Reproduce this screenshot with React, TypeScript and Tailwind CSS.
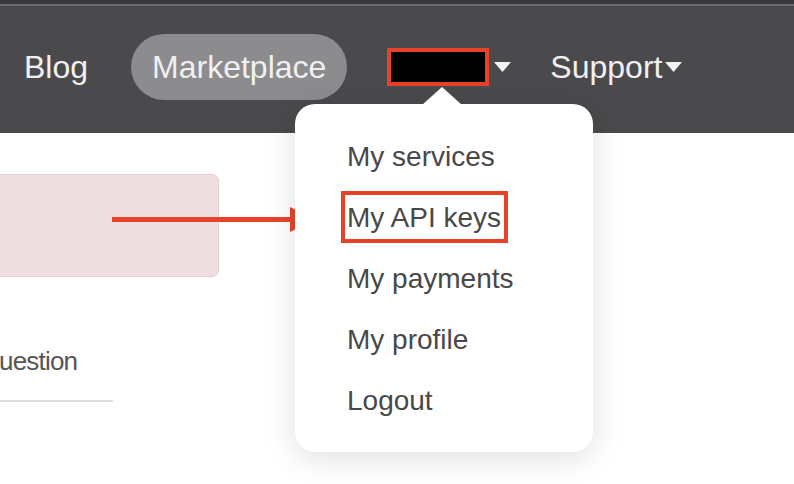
import { ReactNode } from 'react';

const menuItems = ['My services', 'My API keys', 'My payments', 'My profile', 'Logout'];

function Caret() {
  return (
    <svg width="17" height="10" viewBox="0 0 17 10" className="shrink-0">
      <path d="M0 0 L17 0 L8.5 10 Z" fill="#f2f2f2" />
    </svg>
  );
}

function Highlight({ children }: { children: ReactNode }) {
  return (
    <span className="relative inline-block">
      {children}
      <span className="absolute left-[-6px] top-[4px] h-[52px] w-[167px] border-[4px] border-[#e8432a]" />
    </span>
  );
}

export default function App() {
  return (
    <div
      className="relative h-[484px] w-[794px] overflow-hidden bg-white"
      style={{ fontFamily: '"Liberation Sans", Arial, sans-serif' }}
    >
      {/* Top nav */}
      <div className="h-[4px] bg-[#38383b]" />
      <div className="h-[2px] bg-[#6c6c6f]" />
      <header className="flex h-[127px] items-center bg-[#4a4a4d] pb-[5px] text-[32px] text-[#f0f0f0]">
        <span className="ml-[24px]">Blog</span>
        <span className="ml-[43px] flex h-[66px] items-center rounded-full bg-[#8c8c8e] px-[21px]">
          Marketplace
        </span>
        <span className="ml-[40px] h-[38px] w-[102px] border-[4px] border-[#e8432a] bg-black" />
        <span className="ml-[5px]">
          <Caret />
        </span>
        <span className="ml-[39px] flex items-center">
          Support
          <span className="ml-[3px]">
            <Caret />
          </span>
        </span>
      </header>

      {/* Page body, partially visible */}
      <main className="flex flex-col pt-[41px]">
        <div className="-ml-[20px] h-[103px] w-[239px] rounded-[7px] border border-[#e6cdd0] bg-[#f0dfe0]" />
        <div className="-ml-[1px] mt-[68px] text-[26px] leading-[32px] tracking-[-0.8px] text-[#555]">uestion</div>
        <div className="mt-[23px] h-[2px] w-[113px] bg-[#dcdcdc]" />
      </main>

      {/* Annotation arrow */}
      <svg className="absolute left-[112px] top-[207px]" width="204" height="26" viewBox="0 0 204 26">
        <rect x="0" y="10" width="180" height="5" fill="#e8432a" />
        <path d="M178 0 L203 12.5 L178 25 Z" fill="#e8432a" />
      </svg>

      {/* Account dropdown */}
      <div className="absolute left-[295px] top-[104px] h-[348px] w-[298px] rounded-[20px] bg-white shadow-[0_6px_32px_rgba(0,0,0,0.13)]">
        <svg className="absolute left-[127px] top-[-17px]" width="40" height="18" viewBox="0 0 40 18">
          <path d="M0 18 L20 0 L40 18 Z" fill="#ffffff" />
        </svg>
        <ul className="pl-[52px] pt-[22px] text-[28px] leading-[61px] text-[#484848]">
          {menuItems.map((item) => (
            <li key={item}>{item === 'My API keys' ? <Highlight>{item}</Highlight> : item}</li>
          ))}
        </ul>
      </div>
    </div>
  );
}
